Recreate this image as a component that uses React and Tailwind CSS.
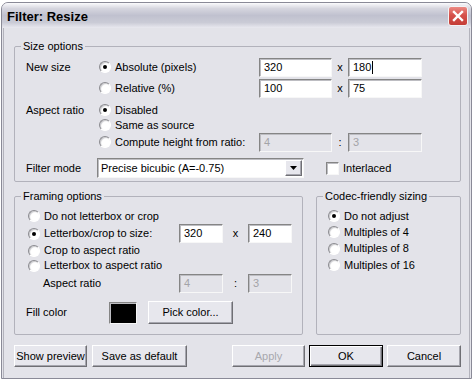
import React from 'react';

// classic sunken edit look
const sunken =
  'border border-t-[#858585] border-l-[#858585] border-r-[#f7f7f7] border-b-[#f7f7f7] shadow-[inset_1px_1px_0_#bdbdc2]';
const raised =
  'border border-t-white border-l-white border-r-[#6f6f74] border-b-[#6f6f74] shadow-[inset_-1px_-1px_0_#a6a6ae]';

function Group({ title, className, children }) {
  return (
    <fieldset className={`rounded-[2px] border border-[#b2b2bb] ${className}`}>
      <legend className="-ml-[5px] px-[2px] leading-[13px]">{title}</legend>
      {children}
    </fieldset>
  );
}

function Radio({ checked, label }) {
  return (
    <div className="flex items-center">
      <span className="flex h-[12px] w-[12px] items-center justify-center rounded-full border border-t-[#8a8a8f] border-l-[#8a8a8f] border-r-white border-b-white bg-white shadow-[inset_1px_1px_1px_#c8c8cc]">
        {checked && <span className="h-[4px] w-[4px] rounded-full bg-black" />}
      </span>
      <span className="ml-[4px]">{label}</span>
    </div>
  );
}

function Field({ value, disabled, caret, className }) {
  return (
    <div
      className={`flex h-[19px] items-center pl-[4px] ${sunken} ${
        disabled ? 'bg-[#e3e3e9] text-[#a3a3a8]' : 'bg-white'
      } ${className}`}
    >
      {value}
      {caret && <span className="ml-[1px] h-[13px] w-[1px] bg-black" />}
    </div>
  );
}

function Btn({ children, className, disabled }) {
  return (
    <button
      className={`flex h-[22px] items-center justify-center bg-[#e7e7ed] ${
        disabled ? 'text-[#a8a8ad]' : ''
      } ${className}`}
    >
      {children}
    </button>
  );
}

export default function App() {
  return (
    <div className="h-[382px] w-[474px] overflow-hidden bg-white pl-[1px] pt-[2px] font-['Liberation_Sans',Arial,sans-serif] text-[11px] text-black">
      <div className="flex h-[377px] w-[471px] flex-col rounded-t-[7px] border border-[#8a8a97] bg-[#e3e3e9]">
        {/* title bar */}
        <div className="flex h-[25px] items-center rounded-t-[6px] bg-[linear-gradient(to_bottom,#fbfbfd_0%,#d6d6df_22%,#c0c1cf_50%,#cacbd6_78%,#e9e9ef_100%)] pl-[5px] pr-[3px]">
          <span className="flex-1 pt-[3px] text-[13px] font-bold">Filter: Resize</span>
          <span className="mt-[1px] flex h-[20px] w-[20px] items-center justify-center rounded-[3px] border border-[#f3f3f5] bg-[linear-gradient(to_bottom,#ec8a84,#d6524c_45%,#c43d37)]">
            <svg width="12" height="12" viewBox="0 0 12 12">
              <path d="M2 2L10 10M10 2L2 10" stroke="white" strokeWidth="2.4" strokeLinecap="square" />
            </svg>
          </span>
        </div>

        {/* client */}
        <div className="mx-[1px] flex-1 border-x border-[#b3b3bc] pl-[10px] pt-[12px]">
          <Group title="Size options" className="w-[447px] pb-[3px] pl-[11px]">
            <div className="mt-[4px] flex h-[20px] items-center">
              <span className="w-[73px]">New size</span>
              <div className="w-[160px]">
                <Radio checked label="Absolute (pixels)" />
              </div>
              <Field value="320" className="w-[73px]" />
              <span className="w-[16px] text-center">x</span>
              <Field value="180" caret className="w-[74px]" />
            </div>
            <div className="mt-[1px] flex h-[20px] items-center">
              <span className="w-[73px]" />
              <div className="w-[160px]">
                <Radio label="Relative (%)" />
              </div>
              <Field value="100" className="w-[73px]" />
              <span className="w-[16px] text-center">x</span>
              <Field value="75" className="w-[74px]" />
            </div>
            <div className="mt-[4px] flex h-[16px] items-center">
              <span className="w-[73px]">Aspect ratio</span>
              <Radio checked label="Disabled" />
            </div>
            <div className="flex h-[14px] items-center">
              <span className="w-[73px]" />
              <Radio label="Same as source" />
            </div>
            <div className="flex h-[20px] items-center">
              <span className="w-[73px]" />
              <div className="w-[160px]">
                <Radio label="Compute height from ratio:" />
              </div>
              <Field value="4" disabled className="w-[73px]" />
              <span className="w-[16px] text-center">:</span>
              <Field value="3" disabled className="w-[74px]" />
            </div>
            <div className="mt-[6px] flex h-[20px] items-center">
              <span className="w-[71px]">Filter mode</span>
              <div className={`flex h-[20px] w-[207px] items-center bg-white pl-[3px] pr-[1px] ${sunken}`}>
                <span className="flex-1">Precise bicubic (A=-0.75)</span>
                <span className={`flex h-[16px] w-[17px] items-center justify-center bg-[#e7e7ed] ${raised}`}>
                  <svg width="7" height="4" viewBox="0 0 7 4">
                    <path d="M0 0H7L3.5 4Z" fill="black" />
                  </svg>
                </span>
              </div>
              <span className={`ml-[22px] h-[13px] w-[13px] bg-white ${sunken}`} />
              <span className="ml-[4px]">Interlaced</span>
            </div>
          </Group>

          <div className="mt-[8px] flex gap-[13px]">
            <Group title="Framing options" className="w-[289px] pb-[10px] pl-[11px]">
              <div className="mt-[5px] flex h-[16px] items-center pl-[2px]">
                <Radio label="Do not letterbox or crop" />
              </div>
              <div className="flex h-[19px] items-center">
                <div className="w-[153px] pl-[2px]">
                  <Radio checked label="Letterbox/crop to size:" />
                </div>
                <Field value="320" className="w-[44px]" />
                <span className="w-[25px] text-center">x</span>
                <Field value="240" className="w-[44px]" />
              </div>
              <div className="flex h-[15px] items-center pl-[2px]">
                <Radio label="Crop to aspect ratio" />
              </div>
              <div className="flex h-[15px] items-center pl-[2px]">
                <Radio label="Letterbox to aspect ratio" />
              </div>
              <div className="mt-[1px] flex h-[19px] items-center">
                <span className="w-[153px] pl-[17px]">Aspect ratio</span>
                <Field value="4" disabled className="w-[44px]" />
                <span className="w-[25px] text-center">:</span>
                <Field value="3" disabled className="w-[44px]" />
              </div>
              <div className="mt-[8px] flex h-[23px] items-center">
                <span className="w-[83px]">Fill color</span>
                <span className={`h-[22px] w-[28px] bg-black ${sunken}`} />
                <Btn className={`ml-[11px] h-[23px] w-[85px] ${raised}`}>Pick color...</Btn>
              </div>
            </Group>

            <Group title="Codec-friendly sizing" className="w-[145px] pl-[11px]">
              <div className="mt-[5px] flex h-[16px] items-center">
                <Radio checked label="Do not adjust" />
              </div>
              <div className="flex h-[16px] items-center">
                <Radio label="Multiples of 4" />
              </div>
              <div className="flex h-[17px] items-center">
                <Radio label="Multiples of 8" />
              </div>
              <div className="flex h-[16px] items-center">
                <Radio label="Multiples of 16" />
              </div>
            </Group>
          </div>

          <div className="mt-[10px] flex w-[447px] items-center">
            <Btn className={`w-[73px] ${raised}`}>Show preview</Btn>
            <Btn className={`ml-[5px] w-[95px] ${raised}`}>Save as default</Btn>
            <span className="flex-1" />
            <Btn disabled className={`w-[73px] ${raised}`}>Apply</Btn>
            <Btn className="ml-[4px] w-[74px] border border-black shadow-[inset_1px_1px_0_#fff,inset_-1px_-1px_0_#6f6f74,inset_-2px_-2px_0_#a6a6ae]">
              OK
            </Btn>
            <Btn className={`ml-[4px] w-[74px] ${raised}`}>Cancel</Btn>
          </div>
        </div>
      </div>
    </div>
  );
}
